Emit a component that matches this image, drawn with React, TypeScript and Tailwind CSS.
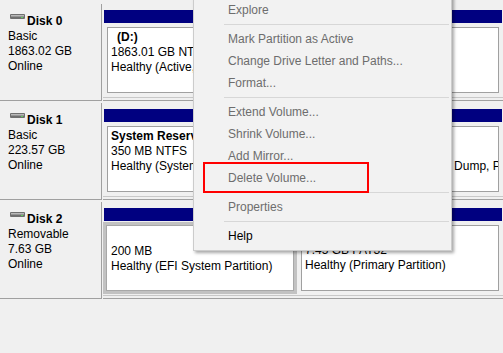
import React from "react";

type Partition = {
  width?: number;
  name?: string;
  nameIndent?: boolean;
  size: string;
  status: string;
  selected?: boolean;
};

type Disk = {
  title: string;
  kind: string;
  size: string;
  state: string;
  partitions: Partition[];
};

type MenuEntry = { label: string; enabled?: boolean } | "sep";

const disks: Disk[] = [
  {
    title: "Disk 0",
    kind: "Basic",
    size: "1863.02 GB",
    state: "Online",
    partitions: [
      {
        name: "(D:)",
        nameIndent: true,
        size: "1863.01 GB NTFS",
        status: "Healthy (Active, Primary Partition)",
      },
    ],
  },
  {
    title: "Disk 1",
    kind: "Basic",
    size: "223.57 GB",
    state: "Online",
    partitions: [
      {
        width: 171,
        name: "System Reserved",
        size: "350 MB NTFS",
        status: "Healthy (System, Active, Primary Partition)",
      },
      {
        name: "(C:)",
        nameIndent: true,
        size: "223.22 GB NTFS",
        status: "Healthy (Boot, Page File, Crash Dump, Primary Partition)",
      },
    ],
  },
  {
    title: "Disk 2",
    kind: "Removable",
    size: "7.63 GB",
    state: "Online",
    partitions: [
      {
        width: 194,
        size: "200 MB",
        status: "Healthy (EFI System Partition)",
        selected: true,
      },
      {
        size: "7.45 GB FAT32",
        status: "Healthy (Primary Partition)",
      },
    ],
  },
];

const menu: MenuEntry[] = [
  { label: "Explore" },
  "sep",
  { label: "Mark Partition as Active" },
  { label: "Change Drive Letter and Paths..." },
  { label: "Format..." },
  "sep",
  { label: "Extend Volume..." },
  { label: "Shrink Volume..." },
  { label: "Add Mirror..." },
  { label: "Delete Volume..." },
  "sep",
  { label: "Properties" },
  "sep",
  { label: "Help", enabled: true },
];

function DiskIcon() {
  return (
    <svg width="15" height="5" viewBox="0 0 15 5" className="mr-[2px] ml-[2px] shrink-0">
      <rect x="0" y="0" width="15" height="5" rx="1" fill="#6f6f6f" />
      <rect x="1" y="1" width="13" height="1.5" fill="#b9b9b9" />
      <rect x="11" y="3" width="2" height="1" fill="#5fcf5f" />
    </svg>
  );
}

function PartitionCell({ p }: { p: Partition }) {
  return (
    <div
      className={p.width ? "flex shrink-0 flex-col pt-[6px]" : "flex min-w-0 flex-1 flex-col pt-[6px]"}
      style={p.width ? { width: p.width } : undefined}
    >
      <div className="mx-[1px] h-[13px] bg-[#000080]" />
      <div
        className={
          p.selected
            ? "flex flex-1 flex-col border-b border-[#c8c8c8] pt-[1px] pb-[1px]"
            : "flex flex-1 flex-col border-b border-[#c8c8c8] px-[4px] pt-[4px] pb-[4px]"
        }
      >
        <div
          className={
            p.selected
              ? "flex-1 overflow-hidden whitespace-nowrap border-[3px] border-[#c2c2c2] bg-white pl-[5px] pt-[4px] shadow-[inset_0_0_0_1px_#a8a8a8]"
              : "flex-1 overflow-hidden whitespace-nowrap border border-[#a0a0a0] bg-white pl-[3px] pt-[2px]"
          }
        >
          <div className={p.nameIndent ? "ml-[6px] h-[15px] font-bold" : "h-[15px] font-bold"}>{p.name}</div>
          <div>{p.size}</div>
          <div>{p.status}</div>
        </div>
      </div>
    </div>
  );
}

function DiskRow({ d }: { d: Disk }) {
  return (
    <div className="flex h-[97px]">
      <div className="w-[102px] shrink-0 border-r border-b border-[#a0a0a0] pl-[8px] pt-[10px]">
        <div className="flex items-start font-bold">
          <DiskIcon />
          <span>{d.title}</span>
        </div>
        <div>{d.kind}</div>
        <div>{d.size}</div>
        <div>{d.state}</div>
      </div>
      <div className="ml-[1px] flex min-w-0 flex-1 border-b border-[#a0a0a0] pb-[2px]">
        {d.partitions.map((p, i) => (
          <PartitionCell key={i} p={p} />
        ))}
      </div>
    </div>
  );
}

export default function App() {
  return (
    <div className="relative h-[353px] w-[503px] overflow-hidden bg-[#f0f0f0] font-['Liberation_Sans',Arial,sans-serif] text-[12px] leading-[15px] text-black">
      <div className="flex flex-col gap-[2px] pt-[4px]">
        {disks.map((d) => (
          <DiskRow key={d.title} d={d} />
        ))}
      </div>

      <div className="absolute left-[193px] top-[-5px] w-[259px] border border-[#cccccc] bg-[#f2f2f2] py-[3px] shadow-[2px_2px_3px_rgba(0,0,0,0.35)]">
        {menu.map((m, i) =>
          m === "sep" ? (
            <div key={i} className="flex h-[7px] items-center pl-[30px] pr-[2px]">
              <div className="h-px w-full bg-[#d7d7d7]" />
            </div>
          ) : (
            <div
              key={i}
              className={
                m.enabled
                  ? "flex h-[22px] items-center pl-[34px] text-black"
                  : "flex h-[22px] items-center pl-[34px] text-[#6d6d6d]"
              }
            >
              {m.label}
            </div>
          )
        )}
      </div>

      <div className="absolute left-[203px] top-[162px] h-[31px] w-[166px] border-2 border-[#ff0000]" />
    </div>
  );
}
